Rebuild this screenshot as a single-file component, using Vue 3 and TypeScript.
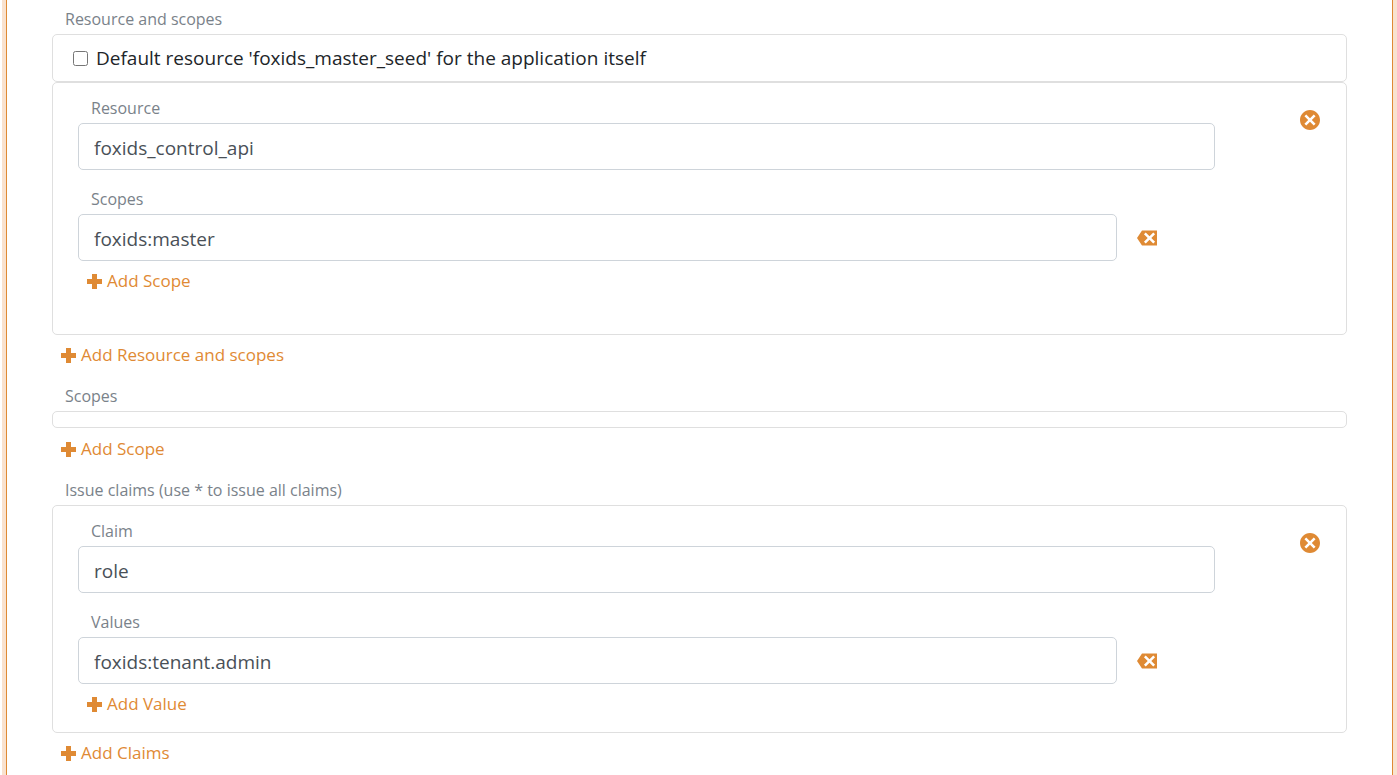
<script setup lang="ts">
import { ref } from 'vue'

interface Group {
  id: string
  title: string
  name: string
  nameLabel: string
  valuesLabel: string
  values: string[]
  addLabel: string
}

const defaultResource = ref(false)

const resources = ref<Group[]>([
  {
    id: 'resource',
    title: 'resource',
    name: 'foxids_control_api',
    nameLabel: 'Resource',
    valuesLabel: 'Scopes',
    values: ['foxids:master'],
    addLabel: 'Add Scope',
  },
])

const claims = ref<Group[]>([
  {
    id: 'claim',
    title: 'claim',
    name: 'role',
    nameLabel: 'Claim',
    valuesLabel: 'Values',
    values: ['foxids:tenant.admin'],
    addLabel: 'Add Value',
  },
])

const sections = [
  { id: 'resources', label: 'Resource and scopes', add: 'Add Resource and scopes', groups: resources },
  { id: 'scopes', label: 'Scopes', add: 'Add Scope', groups: ref<Group[]>([]) },
  { id: 'claims', label: 'Issue claims (use * to issue all claims)', add: 'Add Claims', groups: claims },
]
</script>

<template>
  <main class="frame">
    <form class="form" @submit.prevent>
      <section v-for="section in sections" :key="section.id" class="section">
        <h2 class="label">{{ section.label }}</h2>

        <div v-if="section.id === 'resources'" class="box check-row">
          <input id="default-resource" v-model="defaultResource" type="checkbox" class="check" />
          <label for="default-resource">Default resource 'foxids_master_seed' for the application itself</label>
        </div>

        <div v-if="section.groups.value.length === 0" class="box empty"></div>

        <div
          v-for="group in section.groups.value"
          :key="group.id"
          class="box group"
          :class="{ roomy: section.id === 'resources' }"
        >
          <div class="fields">
            <div class="field">
              <label class="label" :for="group.id + '-name'">{{ group.nameLabel }}</label>
              <input :id="group.id + '-name'" v-model="group.name" type="text" class="text" />
            </div>
            <div class="field">
              <label class="label" :for="group.id + '-value-0'">{{ group.valuesLabel }}</label>
              <div v-for="(_, i) in group.values" :key="i" class="value-row">
                <input :id="group.id + '-value-' + i" v-model="group.values[i]" type="text" class="text" />
                <button type="button" class="icon-button" aria-label="Remove value">
                  <svg class="icon" viewBox="0 0 8 8" aria-hidden="true">
                    <path
                      d="M2 1l-2 3 2 3h6v-6h-6zm1.5 .78l1.5 1.5 1.5-1.5.72.72-1.5 1.5 1.5 1.5-.72.72-1.5-1.5-1.5 1.5-.72-.72 1.5-1.5-1.5-1.5.72-.72z"
                    />
                  </svg>
                </button>
              </div>
            </div>
            <button type="button" class="add">
              <svg class="plus" viewBox="0 0 15 15" aria-hidden="true">
                <path d="M5 0h5v5h5v5h-5v5h-5v-5h-5v-5h5z" />
              </svg>
              {{ group.addLabel }}
            </button>
          </div>
          <button type="button" class="icon-button remove" :aria-label="'Remove ' + group.title">
            <svg class="icon" viewBox="0 0 8 8" aria-hidden="true">
              <path
                d="M4 0c-2.2 0-4 1.8-4 4s1.8 4 4 4 4-1.8 4-4-1.8-4-4-4zm-1.5 1.78l1.5 1.5 1.5-1.5.72.72-1.5 1.5 1.5 1.5-.72.72-1.5-1.5-1.5 1.5-.72-.72 1.5-1.5-1.5-1.5.72-.72z"
              />
            </svg>
          </button>
        </div>

        <button type="button" class="add">
          <svg class="plus" viewBox="0 0 15 15" aria-hidden="true">
            <path d="M5 0h5v5h5v5h-5v5h-5v-5h-5v-5h5z" />
          </svg>
          {{ section.add }}
        </button>
      </section>
    </form>
  </main>
</template>

<style>
body {
  margin: 0;
  background: #fff;
}
</style>

<style scoped>
.frame {
  box-sizing: border-box;
  min-height: 100vh;
  margin-left: 2px;
  border: solid #f9e2cf;
  border-width: 0 4px;
  font-family: 'Open Sans', 'Noto Sans', sans-serif;
  font-size: 19px;
  line-height: 24px;
  color: #212529;
}
.form {
  box-sizing: border-box;
  min-height: 100vh;
  padding: 7px 45px 0;
  border: solid #df8a34;
  border-width: 0 1px;
}
.section {
  margin-bottom: 17px;
}
.section:last-child {
  margin-bottom: 0;
}
.label {
  display: block;
  margin: 0 0 3px;
  padding-left: 13px;
  font-size: 16px;
  font-weight: 400;
  line-height: 24px;
  color: #7a828a;
}
.box {
  box-sizing: border-box;
  border: 1px solid #dfdfdf;
  border-radius: 5px;
}
.check-row {
  display: flex;
  align-items: center;
  gap: 8px;
  height: 48px;
  padding: 0 20px;
}
.check {
  width: 15px;
  height: 15px;
  margin: 0;
}
.empty {
  height: 17px;
}
.group {
  display: flex;
  justify-content: space-between;
  padding: 13px 26px 16px 25px;
}
.roomy {
  padding-bottom: 41px;
}
.fields {
  flex: 1;
  margin-right: 85px;
}
.field + .field {
  margin-top: 17px;
}
.text {
  box-sizing: border-box;
  display: block;
  width: 100%;
  height: 47px;
  padding: 2px 15px 0;
  border: 1px solid #ced4da;
  border-radius: 5px;
  background: #fff;
  font: inherit;
  color: #495057;
}
.value-row {
  display: flex;
  align-items: center;
  gap: 20px;
  margin-right: 58px;
}
.icon-button,
.add {
  padding: 0;
  border: 0;
  background: none;
  color: #df8a34;
  cursor: pointer;
}
.icon-button {
  flex: none;
  height: 20px;
}
.icon {
  display: block;
  width: 20px;
  height: 20px;
  fill: currentColor;
}
.remove {
  margin-top: 14px;
}
.add {
  display: flex;
  align-items: center;
  gap: 5px;
  margin-top: 8px;
  padding-left: 9px;
  font-family: inherit;
  font-size: 17px;
  line-height: 24px;
}
.empty + .add {
  margin-top: 9px;
}
.plus {
  width: 15px;
  height: 15px;
  fill: currentColor;
}
</style>
